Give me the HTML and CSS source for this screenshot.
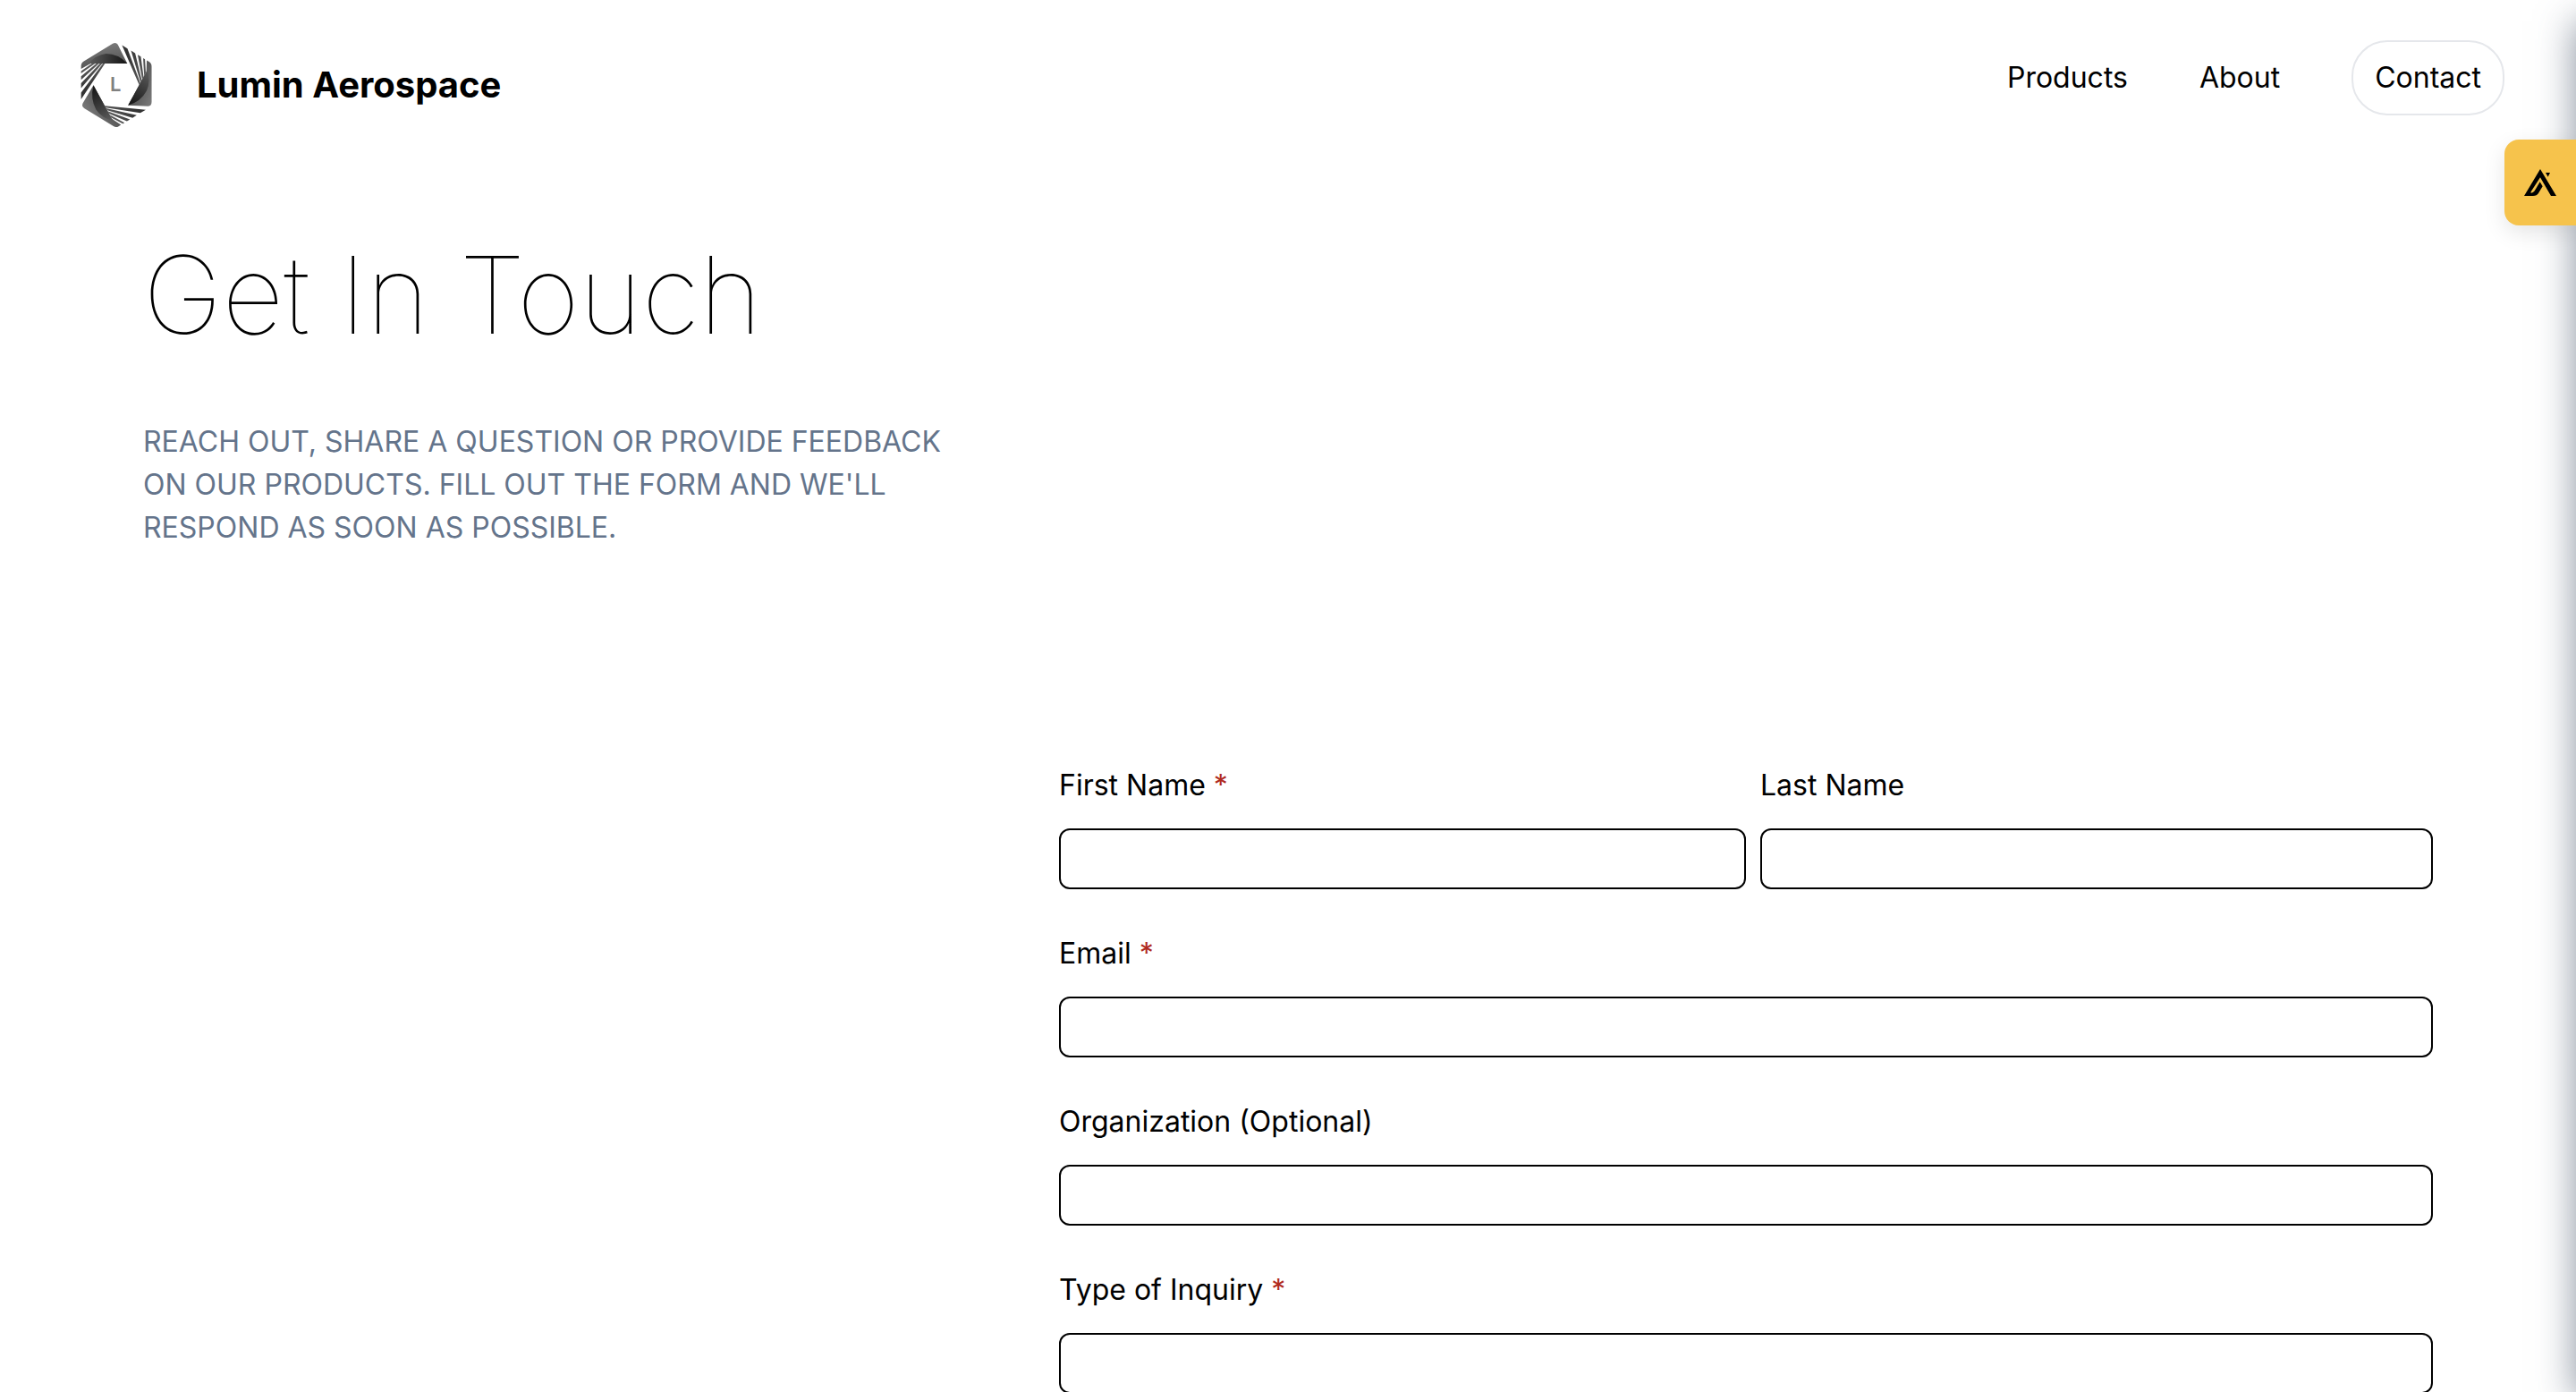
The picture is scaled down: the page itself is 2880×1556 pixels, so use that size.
FILE: index.html
```html
<!DOCTYPE html>
<html lang="en">
<head>
<meta charset="utf-8">
<meta name="viewport" content="width=device-width, initial-scale=1">
<title>Contact | Lumin Aerospace</title>
<link rel="stylesheet" href="styles.css">
</head>
<body>
<header class="header">
  <a class="brand" href="#">
    <svg class="brand-logo" viewBox="30 45 300 300" aria-hidden="true">
      <defs>
        <linearGradient id="blade" gradientUnits="userSpaceOnUse" x1="110" y1="70" x2="130" y2="200">
          <stop offset="0" stop-color="#7a7a7a"/>
          <stop offset="1" stop-color="#333"/>
        </linearGradient>
        <linearGradient id="fold" gradientUnits="userSpaceOnUse" x1="90" y1="110" x2="215" y2="120">
          <stop offset="0" stop-color="#5c5c5c"/>
          <stop offset="1" stop-color="#141414"/>
        </linearGradient>
        <g id="wing">
          <path fill="url(#blade)" d="M62 144V135Q62 125 71 120L168 64Q179 58 185 67L217 127H94Z"/>
          <path fill="url(#fold)" d="M84 130Q112 99 146 96Q186 96 217 127H94Z"/>
          <path fill="url(#blade)" d="M62 151L98 127H109L62 158ZM62 167L113 127H122L62 179ZM62 189L125 127H133L62 205ZM62 219L135 127H142L62 240Z"/>
        </g>
      </defs>
      <g transform="translate(180 194) scale(1 1.06) translate(-180 -194)">
        <use href="#wing"/>
        <use href="#wing" transform="rotate(120 180 194)"/>
        <use href="#wing" transform="rotate(240 180 194)"/>
      </g>
      <text class="logo-letter" x="159" y="215">L</text>
    </svg>
    <span class="brand-name">Lumin Aerospace</span>
  </a>
  <nav class="nav">
    <a class="nav-link" href="#">Products</a>
    <a class="nav-link" href="#">About</a>
    <a class="nav-link nav-pill" href="#">Contact</a>
  </nav>
</header>

<main class="main">
  <h1 class="title">Get In Touch</h1>
  <p class="intro">Reach out, share a question or provide feedback on our products. Fill out the form and we'll respond as soon as possible.</p>
  <form class="form">
    <div class="row">
      <div class="field field-half">
        <label class="label" for="first">First Name <span class="required">*</span></label>
        <input class="input" id="first" type="text" required>
      </div>
      <div class="field">
        <label class="label" for="last">Last Name</label>
        <input class="input" id="last" type="text">
      </div>
    </div>
    <div class="field">
      <label class="label" for="email">Email <span class="required">*</span></label>
      <input class="input" id="email" type="email" required>
    </div>
    <div class="field">
      <label class="label" for="org">Organization (Optional)</label>
      <input class="input" id="org" type="text">
    </div>
    <div class="field">
      <label class="label" for="inquiry">Type of Inquiry <span class="required">*</span></label>
      <input class="input" id="inquiry" type="text" required>
    </div>
  </form>
</main>

<aside class="drawer"></aside>
<button class="drawer-tab" type="button" aria-label="Open panel">
  <svg class="tab-icon" viewBox="156 177 108 90" aria-hidden="true">
    <path d="M210 177L264 267H246L210 205L179 253Q176 260 184 256Q190 253 194 245L209 220L218 235L204 258Q199 267 186 267H156Z"/>
    <path d="M228 189H243L236 203Z"/>
  </svg>
</button>
</body>
</html>
```
FILE: styles.css
```css
* {
  box-sizing: border-box;
}

html {
  overflow: hidden;
}

body {
  margin: 0;
  background: #fff;
  color: #000;
  font-family: Inter, "Liberation Sans", sans-serif;
  font-size: 32px;
  line-height: 48px;
}

.header {
  display: flex;
  justify-content: space-between;
  align-items: flex-start;
  padding: 45px 80px 0;
}

.brand {
  display: flex;
  align-items: center;
  gap: 40px;
  color: inherit;
  text-decoration: none;
}

.brand-logo {
  width: 100px;
  height: 100px;
}

.logo-letter {
  font-size: 66px;
  font-weight: 600;
  fill: #808080;
}

.brand-name {
  font-size: 40px;
  font-weight: 700;
}

.nav {
  display: flex;
  align-items: center;
  gap: 80px;
}

.nav-link {
  color: inherit;
  text-decoration: none;
}

.nav-pill {
  padding: 16px 24px;
  border: 2px solid #e5e7eb;
  border-radius: 40px;
}

.main {
  padding: 125px 160px 48px;
}

.title {
  margin: 0 0 80px;
  font-size: 120px;
  font-weight: 100;
  line-height: 120px;
}

.intro {
  width: 35%;
  margin: 0 0 240px;
  color: #64748b;
  text-transform: uppercase;
}

.form {
  display: flex;
  flex-direction: column;
  gap: 48px;
  width: 60%;
  margin-left: auto;
}

.row {
  display: flex;
  gap: 16px;
}

.field {
  display: flex;
  flex: 1;
  flex-direction: column;
  gap: 24px;
}

.field-half {
  flex: 0 0 50%;
}

.required {
  color: #b02a20;
}

.input {
  width: 100%;
  height: 68px;
  padding: 8px 16px;
  border: 2px solid #000;
  border-radius: 12px;
  background: transparent;
  font: inherit;
}

/* Drawer is closed: it waits past the right edge and only its shadow shows. */
.drawer {
  position: fixed;
  top: 24px;
  bottom: -8px;
  left: 100%;
  width: 400px;
  box-shadow: 0 0 40px rgba(71, 85, 105, 0.64);
}

.drawer-tab {
  position: fixed;
  top: 156px;
  right: 0;
  display: flex;
  align-items: center;
  justify-content: center;
  width: 80px;
  height: 96px;
  padding: 0;
  border: 0;
  border-radius: 16px 0 0 16px;
  background: #f6c34c;
  box-shadow: 0 8px 24px rgba(0, 0, 0, 0.1);
}

.tab-icon {
  width: 36px;
  height: 30px;
}
```
